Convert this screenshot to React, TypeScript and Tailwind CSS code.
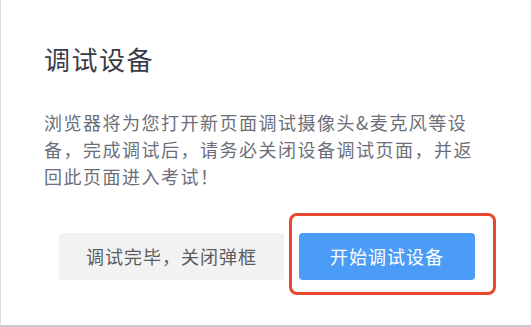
import React from 'react';

const font = { fontFamily: '"Noto Sans CJK SC", "Noto Sans", sans-serif' };

const App = () => {
  return (
    <div
      className="w-[531px] h-[327px] bg-white border-l border-l-[#dcdbe3] border-b-2 border-b-[#c9c7d4] overflow-hidden"
      style={font}
    >
      {/* title */}
      <h2 className="pl-[43px] pt-[41px] text-[26px] leading-[36px] tracking-[1.5px] text-[#3a3d48] font-normal">
        调试设备
      </h2>

      {/* message */}
      <p className="pl-[43px] mt-[32px] text-[18px] leading-[27px] tracking-[1.5px] text-[#6c6f79] whitespace-nowrap">
        浏览器将为您打开新页面调试摄像头&amp;麦克风等设
        <br />
        备，完成调试后，请务必关闭设备调试页面，并返
        <br />
        回此页面进入考试！
      </p>

      {/* actions */}
      <div className="flex items-start pl-[58px] mt-[23px]">
        <button className="mt-[20px] w-[225px] h-[47px] rounded-[4px] bg-[#f2f2f2] text-[18px] tracking-[1px] text-[#5a5b60]">
          调试完毕，关闭弹框
        </button>
        <div className="ml-[5px] border-[3px] border-[#e9472e] rounded-[8px] pl-[7px] pt-[17px] pr-[18px] pb-[12px]">
          <button className="w-[176px] h-[47px] rounded-[4px] bg-[#4b9cf7] text-[18px] tracking-[1px] text-white">
            开始调试设备
          </button>
        </div>
      </div>
    </div>
  );
};

export default App;
